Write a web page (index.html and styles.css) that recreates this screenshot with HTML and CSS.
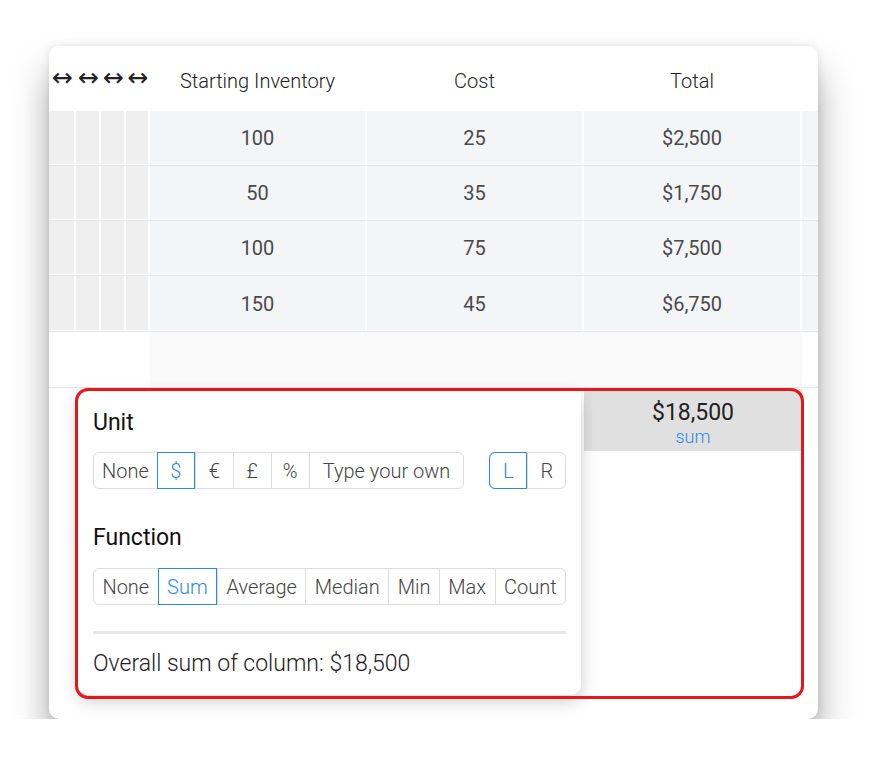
FILE: index.html
```html
<!DOCTYPE html>
<html lang="en">
<head>
    <meta charset="UTF-8">
    <meta name="viewport" content="width=device-width, initial-scale=1.0">
    <title>Column summary</title>
    <link rel="stylesheet" href="styles.css">
</head>
<body>
    <div class="sheet">
        <div class="grid">
            <!-- header -->
            <div class="cell head drag">↔</div>
            <div class="cell head drag">↔</div>
            <div class="cell head drag">↔</div>
            <div class="cell head drag">↔</div>
            <div class="cell head">Starting Inventory</div>
            <div class="cell head">Cost</div>
            <div class="cell head">Total</div>
            <div class="cell head"></div>

            <!-- rows -->
            <div class="cell side"></div><div class="cell side"></div><div class="cell side"></div><div class="cell side"></div>
            <div class="cell">100</div><div class="cell">25</div><div class="cell">$2,500</div><div class="cell"></div>

            <div class="cell side"></div><div class="cell side"></div><div class="cell side"></div><div class="cell side"></div>
            <div class="cell">50</div><div class="cell">35</div><div class="cell">$1,750</div><div class="cell"></div>

            <div class="cell side"></div><div class="cell side"></div><div class="cell side"></div><div class="cell side"></div>
            <div class="cell">100</div><div class="cell">75</div><div class="cell">$7,500</div><div class="cell"></div>

            <div class="cell side"></div><div class="cell side"></div><div class="cell side"></div><div class="cell side"></div>
            <div class="cell">150</div><div class="cell">45</div><div class="cell">$6,750</div><div class="cell"></div>

            <!-- empty row -->
            <div class="cell blank"></div><div class="cell blank"></div><div class="cell blank"></div><div class="cell blank"></div>
            <div class="cell new"></div><div class="cell new"></div><div class="cell new"></div><div class="cell blank"></div>

            <!-- footer -->
            <div class="foot"></div><div class="foot"></div><div class="foot"></div><div class="foot"></div>
            <div class="foot"></div><div class="foot"></div>
            <div class="foot total">
                <div class="total-value">$18,500</div>
                <div class="total-fn">sum</div>
            </div>
            <div class="foot"></div>
        </div>

        <div class="popup">
            <div class="popup-title">Unit</div>
            <div class="unit-row">
                <div class="btn-group">
                    <div class="btn">None</div>
                    <div class="btn active">$</div>
                    <div class="btn">€</div>
                    <div class="btn">£</div>
                    <div class="btn">%</div>
                    <div class="btn wide">Type your own</div>
                </div>
                <div class="btn-group">
                    <div class="btn active">L</div>
                    <div class="btn">R</div>
                </div>
            </div>

            <div class="popup-title fn-title">Function</div>
            <div class="btn-group full">
                <div class="btn">None</div>
                <div class="btn active">Sum</div>
                <div class="btn">Average</div>
                <div class="btn">Median</div>
                <div class="btn">Min</div>
                <div class="btn">Max</div>
                <div class="btn">Count</div>
            </div>

            <div class="divider"></div>
            <div class="overall">Overall sum of column: $18,500</div>
        </div>

        <div class="highlight"></div>
    </div>
</body>
</html>
```

FILE: styles.css
```css
body {
    margin: 0;
    background: white;
    font-family: 'Roboto', 'Liberation Sans', sans-serif;
}

.sheet {
    position: relative;
    margin: 46px 0 0 49px;
    width: 769px;
    height: 673px;
    background: white;
    border-radius: 10px;
    box-shadow: 0 26px 36px rgba(0,0,0,0.34), 0 0 8px rgba(0,0,0,0.1);
    overflow: hidden;
}

.grid {
    display: grid;
    grid-template-columns: 27px 25px 25px 24px 217px 217px 218px 16px;
    grid-template-rows: 65px 55px 55px 55px 56px 56px 63px;
}

.cell {
    box-sizing: border-box;
    display: flex;
    align-items: center;
    justify-content: center;
    background: #f4f5f7;
    border-right: 2px solid white;
    border-bottom: 1px solid #e1e1ea;
    box-shadow: inset 0 -1px 0 white;
    font-size: 20px;
    color: #4a4a4a;
}

.cell:nth-child(8n) {
    border-right: none;
}

.head {
    background: white;
    border-bottom: none;
    box-shadow: none;
    font-size: 20px;
    font-weight: 300;
    color: #222;
    padding-top: 4px;
}

.drag {
    font-family: 'DejaVu Sans', sans-serif;
    font-size: 25px;
    font-weight: 400;
    color: #222;
    border-right: none;
    padding-top: 0;
    padding-bottom: 2px;
}

.side {
    background: #efefef;
}

.blank {
    background: white;
    border-right: none;
    border-bottom: 1px solid #e4e4ec;
    box-shadow: none;
}

.new {
    background: #f9f9f9;
    border-right: none;
    border-bottom: 1px solid #e4e4ec;
    box-shadow: none;
}

.foot {
    margin-top: 1px;
}

.total {
    background: #e0e0e0;
    display: flex;
    flex-direction: column;
    align-items: center;
    padding-top: 10px;
    box-sizing: border-box;
}

.total-value {
    font-size: 23px;
    color: #222;
    line-height: 28px;
}

.total-fn {
    font-size: 18px;
    font-weight: 300;
    color: #2b8ae6;
    line-height: 20px;
}

.popup {
    position: absolute;
    left: 29px;
    top: 346px;
    width: 503px;
    height: 303px;
    box-sizing: border-box;
    padding: 16px 15px 0;
    background: white;
    border-radius: 0 0 10px 10px;
    box-shadow: 0 6px 18px rgba(0,0,0,0.2);
}

.popup-title {
    font-size: 23px;
    color: #111;
    line-height: 30px;
    margin-bottom: 14px;
}

.fn-title {
    margin-top: 34px;
    margin-bottom: 15px;
}

.unit-row {
    display: flex;
    gap: 25px;
}

.btn-group {
    display: flex;
    flex-shrink: 0;
    height: 37px;
    border: 1px solid #dcdcdc;
    border-radius: 6px;
    box-sizing: border-box;
}

.btn-group.full {
    width: 473px;
}

.btn {
    display: flex;
    align-items: center;
    justify-content: center;
    flex-shrink: 0;
    white-space: nowrap;
    min-width: 38px;
    padding: 0 9px;
    box-sizing: border-box;
    border-left: 1px solid #dcdcdc;
    font-size: 20px;
    font-weight: 300;
    color: #444;
}

.btn:first-child {
    border-left: none;
    padding: 0 8px;
}

.btn.wide {
    padding: 0 13px;
}

.full .btn {
    flex: 1 1 auto;
    padding: 0 8px;
}

.btn.active {
    border: 1.5px solid #2b8ae6;
    margin: -1px 0;
    color: #2b8ae6;
}

.btn-group .btn.active:first-child {
    border-radius: 6px 0 0 6px;
    margin-left: -1px;
}

.divider {
    height: 3px;
    background: #e8e8e8;
    margin-top: 26px;
}

.overall {
    margin-top: 16px;
    font-size: 23px;
    font-weight: 300;
    color: #222;
}

.highlight {
    position: absolute;
    left: 26px;
    top: 342px;
    width: 729px;
    height: 311px;
    box-sizing: border-box;
    border: 3px solid #e8161a;
    border-radius: 13px;
    pointer-events: none;
}
```
